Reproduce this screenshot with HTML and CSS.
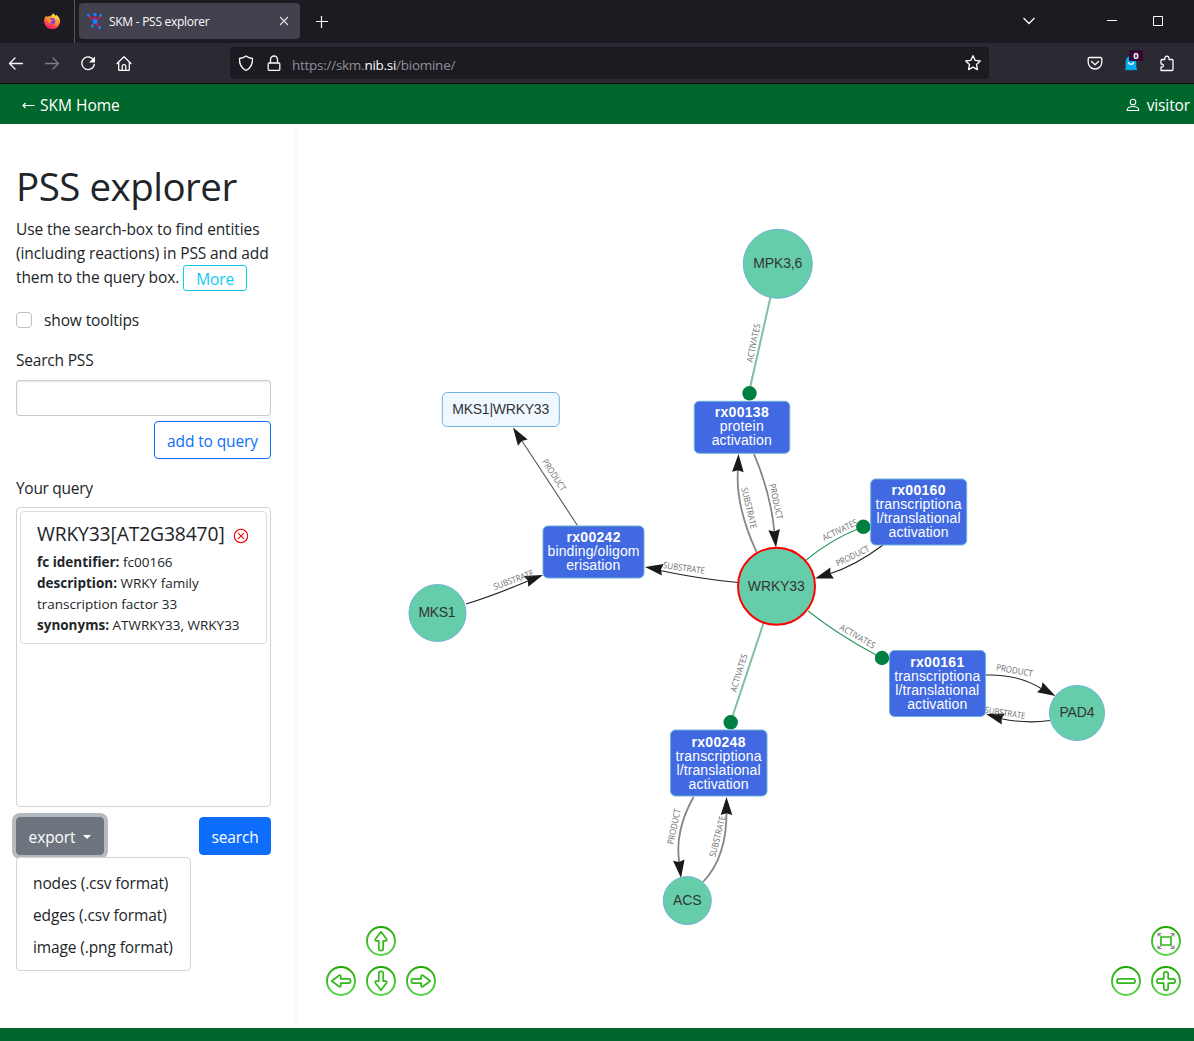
FILE: index.html
```html
<!DOCTYPE html>
<html lang="en">
<head>
<meta charset="utf-8">
<title>SKM - PSS explorer</title>
<link rel="stylesheet" href="styles.css">
</head>
<body>
<div class="tabbar">
  <div class="pinned">
    <svg width="16" height="16" viewBox="0 0 16 16"><defs><linearGradient id="fx" x1=".8" y1="0" x2=".3" y2="1"><stop offset="0" stop-color="#fff44f"/><stop offset=".45" stop-color="#ff9a2b"/><stop offset=".8" stop-color="#ff3750"/><stop offset="1" stop-color="#f5156c"/></linearGradient></defs><path d="M9.400 0c.6 1.500 1.500 2 2.500 2.800l.2-1C14.500 3.200 16 5.500 16 8.300A7.900 7.900 0 0 1 .1 8.300C.1 6 1 4 2.300 2.600L2.800 4l1.500-.8 1.900.3C6.500 2.500 8.300 2 9.400 0z" fill="url(#fx)"/><circle cx="7.900" cy="8.300" r="3.300" fill="#8a3fe0"/><path d="M3 6.500c1.200-1.500 3-.8 4 .2l1.600.2c-.2 1-1.500 1-2 1.800-.2 1 .4 1.800 1.600 1.900-2 .7-4.200-.3-4.200-2.500z" fill="#ff8b2a"/></svg>
  </div>
  <div class="tab">
    <svg width="16" height="16" viewBox="0 0 16 16"><path d="M1.500 2.500 8 8.500 14 2.500M8 8.500v-6M8 8.500l-3 4.500M8 8.500l4.500 6" stroke="#f0105f" stroke-width="1.300" fill="none"/><g fill="#0a84ff"><circle cx="8" cy="8.500" r="2.500"/><path d="M0 1h2.500v2.500H0zM6.500 0h3v3h-3zM12.500 1H15v2.500h-2.500zM4 12h2.500v2.500H4zM11.500 13.300H14V16h-2.500z"/></g></svg>
    <span class="tab-title">SKM - PSS explorer</span>
    <svg class="tab-close" width="10" height="10" viewBox="0 0 10 10"><path d="m1 1 8 8M9 1 1 9" stroke="#e0e0e6" stroke-width="1.100"/></svg>
  </div>
  <svg class="newtab" width="12" height="12" viewBox="0 0 12 12"><path d="M5.500 0v12M0 5.500h12" stroke="#fbfbfe" stroke-width="1.200"/></svg>
  <div class="window-buttons">
    <svg width="14" height="8" viewBox="0 0 14 8"><path d="m1.500 1 5.500 5.500L12.500 1" fill="none" stroke="#fbfbfe" stroke-width="1.300"/></svg>
    <svg width="10" height="10" viewBox="0 0 10 10"><path d="M0 4.500h10" stroke="#fff"/></svg>
    <svg width="10" height="10" viewBox="0 0 10 10"><path d="M.5.500h9v9h-9z" fill="none" stroke="#fff"/></svg>
  </div>
</div>
<div class="toolbar">
  <div class="nav">
    <svg width="16" height="16" viewBox="0 0 16 16"><path d="M14.500 8.500h-13M7 3 1.500 8.500 7 14"/></svg>
    <svg class="dim" width="16" height="16" viewBox="0 0 16 16"><path d="M1.500 8.500h13M9 3l5.500 5.500L9 14"/></svg>
    <svg width="16" height="16" viewBox="0 0 16 16"><path d="M13.500 5A6.300 6.300 0 1 0 14.300 9.500"/><path d="M15 1.500v6H9z" class="solid"/></svg>
    <svg width="16" height="16" viewBox="0 0 16 16"><path d="M1 8.500 8 1.700l7 6.800M2.700 7.500v7c0 .7.300 1 1 1h8.600c.7 0 1-.3 1-1v-7M6.200 15.500v-4c0-1.200.6-1.800 1.800-1.800s1.800.6 1.800 1.800v4"/></svg>
  </div>
  <div class="urlbar">
    <svg width="16" height="17" viewBox="0 0 16 17"><path d="M8 1c2 1.500 4 2.100 6.500 2.500.3 5.500-1.500 9.500-6.500 12-5-2.500-6.800-6.500-6.500-12C4 3.100 6 2.500 8 1z"/></svg>
    <svg width="14" height="17" viewBox="0 0 14 17"><path d="M3.500 8V4.500a3.500 3.500 0 0 1 7 0V8M2.200 8h9.600c.6 0 1 .4 1 1v5.300c0 .6-.4 1-1 1H2.200c-.6 0-1-.4-1-1V9c0-.6.400-1 1-1z"/></svg>
    <span class="url">https://skm.<b>nib.si</b>/biomine/</span>
    <svg class="star" width="18" height="18" viewBox="0 0 18 18"><path d="m9 1.700 2.200 4.700 5.100.6-3.800 3.500 1 5.100L9 13.100l-4.500 2.500 1-5.100L1.700 7l5.100-.6z"/></svg>
  </div>
  <div class="extensions">
    <svg width="16" height="16" viewBox="0 0 16 16"><path d="M2.500 2.500h11c.8 0 1.300.5 1.300 1.300v3.400a6.800 6.800 0 0 1-13.600 0V3.800c0-.8.500-1.300 1.300-1.300zM4.500 6.500 8 9.700l3.500-3.200"/></svg>
    <div class="ghost"><svg width="14" height="16" viewBox="0 0 14 16"><path d="M.8 15.200c1.300-2 .7-5 .9-8C1.900 3 4 1 7 1s5.100 2 5.300 6.200c.1 3-.2 6 1 8l-2-.5-1.500.8-1.300-1L7 15.800l-1.500-1.300-1.300 1-1.400-.8z" style="fill:#00aef0;stroke:none"/><path d="M4.500 7.500C5 10 9 10 9.500 7.500" stroke="#fff"/></svg><span class="count">0</span></div>
    <svg width="16" height="17" viewBox="0 0 16 17"><path d="M2 15.500V12c3 .7 3.500-3.300 0-3V5.500c0-.6.300-1 1-1h2.800c-.5-4.500 4.800-4.500 4.200 0h3c.6 0 1 .4 1 1v9c0 .7-.4 1-1 1z"/></svg>
  </div>
</div>
<header class="site-header">
  <a class="home"><svg width="13" height="10" viewBox="0 0 13 10"><path d="M12.500 5.500H1M3.500 3 1 5.500 3.500 8" fill="none" stroke="#fff" stroke-width="1.200"/></svg>SKM Home</a>
  <a class="visitor"><svg width="14" height="14" viewBox="0 0 14 14"><circle cx="7" cy="4" r="2.800" fill="none" stroke="#fff" stroke-width="1.100"/><path d="M1.200 12.500c0-2.400 2-4 5.800-4s5.800 1.600 5.800 4z" fill="none" stroke="#fff" stroke-width="1.100"/></svg>visitor</a>
</header>
<main class="content">
  <aside class="sidebar">
    <h1>PSS explorer</h1>
    <p class="intro">Use the search-box to find entities<br>(including reactions) in PSS and add<br>them to the query box. <span class="more">More</span></p>
    <label class="check"><span class="box"></span>show tooltips</label>
    <div class="label">Search PSS</div>
    <div class="input"></div>
    <div class="row-end"><button class="btn outline">add to query</button></div>
    <div class="label query-label">Your query</div>
    <div class="query">
      <div class="card">
        <div class="card-title">WRKY33[AT2G38470]<svg width="16" height="16" viewBox="0 0 16 16"><circle cx="8" cy="8" r="6.700" fill="none" stroke="#f00" stroke-width="1.100"/><path d="m5.200 5.200 5.600 5.600M10.800 5.200l-5.600 5.600" stroke="#f00" stroke-width="1.100"/></svg></div>
        <div><b>fc identifier:</b> fc00166</div>
        <div><b>description:</b> WRKY family</div>
        <div>transcription factor 33</div>
        <div><b>synonyms:</b> ATWRKY33, WRKY33</div>
      </div>
    </div>
    <div class="actions">
      <div class="dropdown">
        <button class="btn export">export<i class="caret"></i></button>
        <div class="menu"><a>nodes (.csv format)</a><a>edges (.csv format)</a><a>image (.png format)</a></div>
      </div>
      <button class="btn primary">search</button>
    </div>
  </aside>
  <svg class="network" width="897" height="904" viewBox="297 124 897 904">
    <defs>
      <path id="arrow" d="M0 0-18 5.800-16.200 0-18-5.800z" fill="#1a1a1a"/>
      <linearGradient id="ctl" x1="0" y1="0" x2="0" y2="1"><stop offset="0" stop-color="#1fa800"/><stop offset="1" stop-color="#57d34a"/></linearGradient>
      <path id="navArrow" d="M-9.300 0-2-5.500c1.200-.7 1.800-.2 1.800.7v2.600h8c1.300 0 1.800.6 1.800 2.200s-.5 2.200-1.800 2.200h-8v2.600c0 .9-.6 1.400-1.800.7z"/>
    </defs>
    <g class="edges">
      <path class="act" d="M770.500 297 750 388"/>
      <path class="act" d="M763.500 623 732 718"/>
      <path class="act thin" d="M806 560Q832 539 859 528.500"/>
      <path class="act thin" d="M808 611Q840 636 878 656"/>
      <path class="thin" d="M577.500 525.500 522 441"/>
      <path class="thin dark" d="M466 604Q492 596 528 581"/>
      <path class="thin dark" d="M738 582.500Q700 579 660 570.500"/>
      <path d="M756.500 552Q735 505 738 469"/>
      <path d="M754 454Q771 494 774.500 533"/>
      <path class="thin dark" d="M883 545Q855 566 829 574"/>
      <path class="thin dark" d="M986 675Q1018 674 1042 689"/>
      <path class="thin dark" d="M1050 720.500Q1026 724 1000 718.500"/>
      <path d="M693.500 797Q674 832 679.500 864"/>
      <path d="M703 882Q727 857 726.500 811"/>
    </g>
    <g>
      <use href="#arrow" transform="translate(513 427.500) rotate(-123)"/>
      <use href="#arrow" transform="translate(543 575) rotate(-21)"/>
      <use href="#arrow" transform="translate(645 567) rotate(-171)"/>
      <use href="#arrow" transform="translate(738.500 454) rotate(-88)"/>
      <use href="#arrow" transform="translate(776 547.500) rotate(84)"/>
      <use href="#arrow" transform="translate(815 578.500) rotate(162)"/>
      <use href="#arrow" transform="translate(1055.500 696) rotate(29)"/>
      <use href="#arrow" transform="translate(986 714) rotate(-164)"/>
      <use href="#arrow" transform="translate(681 878) rotate(83)"/>
      <use href="#arrow" transform="translate(726.500 797) rotate(-90)"/>
    </g>
    <g fill="#008040"><circle cx="749.500" cy="393.300" r="7.200"/><circle cx="863.300" cy="526.800" r="7.200"/><circle cx="882" cy="658" r="7.200"/><circle cx="730.700" cy="722.300" r="7.200"/></g>
    <g class="edge-labels">
      <text textLength="39" lengthAdjust="spacingAndGlyphs" transform="translate(753.500 343) rotate(-78)" y="3">ACTIVATES</text>
      <text textLength="36" lengthAdjust="spacingAndGlyphs" transform="translate(554 475) rotate(57)" y="3">PRODUCT</text>
      <text textLength="42" lengthAdjust="spacingAndGlyphs" transform="translate(513.500 580) rotate(-20)" y="3">SUBSTRATE</text>
      <text textLength="42" lengthAdjust="spacingAndGlyphs" transform="translate(684 568) rotate(8)" y="3">SUBSTRATE</text>
      <text textLength="42" lengthAdjust="spacingAndGlyphs" transform="translate(749 508) rotate(77)" y="3">SUBSTRATE</text>
      <text textLength="36" lengthAdjust="spacingAndGlyphs" transform="translate(776 501.500) rotate(78)" y="3">PRODUCT</text>
      <text textLength="38" lengthAdjust="spacingAndGlyphs" transform="translate(840 530) rotate(-26)" y="3">ACTIVATES</text>
      <text textLength="36" lengthAdjust="spacingAndGlyphs" transform="translate(852.500 556) rotate(-26)" y="3">PRODUCT</text>
      <text textLength="39" lengthAdjust="spacingAndGlyphs" transform="translate(857.500 636.500) rotate(30)" y="3">ACTIVATES</text>
      <text textLength="39" lengthAdjust="spacingAndGlyphs" transform="translate(739 673) rotate(-73)" y="3">ACTIVATES</text>
      <text textLength="37" lengthAdjust="spacingAndGlyphs" transform="translate(1014.500 670.500) rotate(10)" y="3">PRODUCT</text>
      <text textLength="41" lengthAdjust="spacingAndGlyphs" transform="translate(1005 713) rotate(9)" y="3">SUBSTRATE</text>
      <text textLength="36" lengthAdjust="spacingAndGlyphs" transform="translate(674 826.500) rotate(-78)" y="3">PRODUCT</text>
      <text textLength="42" lengthAdjust="spacingAndGlyphs" transform="translate(717.500 836.500) rotate(-76)" y="3">SUBSTRATE</text>
    </g>
    <g class="entities">
      <circle cx="777.800" cy="263.800" r="34.500"/><circle cx="437.500" cy="613" r="28.500"/><circle cx="1077" cy="713" r="27.500"/><circle cx="687.300" cy="900.600" r="24"/>
      <circle class="selected" cx="776.500" cy="586.300" r="38.500"/>
    </g>
    <rect class="complex" x="442.300" y="392.500" width="117" height="34" rx="5"/>
    <g class="reactions">
      <rect x="694.300" y="401.300" width="95.500" height="52" rx="5"/>
      <rect x="543" y="526" width="101" height="52" rx="5"/>
      <rect x="870.700" y="479" width="96" height="66" rx="5"/>
      <rect x="889.500" y="650.500" width="96" height="66" rx="5"/>
      <rect x="670.500" y="730" width="96.500" height="66" rx="5"/>
    </g>
    <g class="names">
      <text x="777.800" y="268" textLength="49">MPK3,6</text><text x="437" y="617" textLength="37">MKS1</text><text x="776.300" y="591" textLength="57">WRKY33</text><text x="1077" y="717" textLength="35">PAD4</text><text x="687.300" y="905">ACS</text><text x="500.700" y="414" textLength="97">MKS1|WRKY33</text>
    </g>
    <g class="names light">
      <text x="741.700" y="417" class="bold" textLength="54">rx00138</text><text x="741.700" y="431" textLength="44">protein</text><text x="741.700" y="445" textLength="60">activation</text>
      <text x="593.500" y="542" class="bold" textLength="54">rx00242</text><text x="593.500" y="556" textLength="92">binding/oligom</text><text x="593.200" y="570" textLength="54">erisation</text>
      <text x="918.500" y="495" class="bold" textLength="54">rx00160</text><text x="918.500" y="509" textLength="86">transcriptiona</text><text x="918.500" y="523" textLength="84">l/translational</text><text x="918.500" y="537" textLength="60">activation</text>
      <text x="937.200" y="667" class="bold" textLength="54">rx00161</text><text x="937.200" y="681" textLength="86">transcriptiona</text><text x="937.200" y="695" textLength="84">l/translational</text><text x="937.200" y="709" textLength="60">activation</text>
      <text x="718.500" y="747" class="bold" textLength="54">rx00248</text><text x="718.500" y="761" textLength="86">transcriptiona</text><text x="718.500" y="775" textLength="84">l/translational</text><text x="718.500" y="789" textLength="60">activation</text>
    </g>
    <g class="rings">
      <circle cx="381" cy="941" r="14"/><circle cx="341" cy="981" r="14"/><circle cx="381" cy="981" r="14"/><circle cx="421" cy="981" r="14"/>
      <circle cx="1166" cy="941" r="14"/><circle cx="1126" cy="981" r="14"/><circle cx="1166" cy="981" r="14"/>
    </g>
    <g class="glyphs">
      <use href="#navArrow" transform="translate(341 981)"/>
      <use href="#navArrow" transform="translate(381 941) rotate(90)"/>
      <use href="#navArrow" transform="translate(381 981) rotate(-90)"/>
      <use href="#navArrow" transform="translate(421 981) rotate(180)"/>
      <rect x="-9" y="-2.200" width="18" height="4.400" rx="1.800" transform="translate(1126 981)"/>
      <path transform="translate(1166 981)" d="M-2.200-7.500c0-2.200 4.400-2.200 4.400 0v5.300h5.300c2.200 0 2.200 4.400 0 4.400H2.200v5.300c0 2.200-4.400 2.200-4.400 0V2.200h-5.300c-2.200 0-2.200-4.400 0-4.400h5.300z"/>
      <rect x="-5" y="-4" width="10" height="8" rx=".5" transform="translate(1166 941)"/>
      <path class="corners" transform="translate(1166 941)" d="M-8-4.500V-7.500h3.500M-8-7.500l3 3M8-4.500V-7.500H4.500M8-7.500l-3 3M-8 4.500V7.500h3.500M-8 7.500l3-3M8 4.500V7.500H4.500M8 7.500l-3-3"/>
    </g>
  </svg>
</main>
<footer class="site-footer"></footer>
</body>
</html>
```
FILE: styles.css
```css
* { box-sizing: border-box; }
body { margin: 0; height: 1041px; display: flex; flex-direction: column; overflow: hidden; background: #fff; color: #212529; font: 15.5px/24px "Open Sans", "Noto Sans", sans-serif; letter-spacing: -0.12px; }
svg { flex: none; display: block; }
.tabbar { height: 43px; background: #1c1b22; display: flex; flex: none; }
.pinned { width: 75px; border-right: 1px solid #56555c; padding: 13px 0 0 44px; }
.tab { margin: 3px 0 0 4px; width: 221px; height: 36px; border-radius: 4px; background: #42414d; display: flex; align-items: center; padding: 0 11px 0 8px; }
.tab-title { font-size: 12px; color: #fbfbfe; margin: 2px 0 0 6px; letter-spacing: -0.28px; }
.tab-close { margin-left: auto; }
.newtab { margin: 16px 0 0 16px; }
.window-buttons { margin-left: auto; display: flex; align-items: center; padding-right: 31px; height: 41px; }
.window-buttons svg:nth-child(2) { margin-left: 71px; }
.window-buttons svg:nth-child(3) { margin-left: 36px; }
.toolbar { height: 41px; background: #2b2a33; border-bottom: 1px solid #0c0c0d; display: flex; align-items: center; flex: none; }
.toolbar svg { fill: none; stroke: #fbfbfe; stroke-width: 1.3; stroke-linejoin: round; stroke-linecap: round; }
.toolbar .solid { fill: #fbfbfe; stroke: none; }
.toolbar .dim { opacity: .4; }
.nav { display: flex; gap: 20px; padding-left: 8px; width: 230px; }
.urlbar { width: 759px; height: 32px; border-radius: 4px; background: #1c1b22; display: flex; align-items: center; padding: 0 7px 0 8px; }
.urlbar svg:nth-child(2) { margin-left: 13px; }
.url { font-size: 13.5px; margin: 3px 0 0 11px; color: #8f8f96; letter-spacing: -0.27px; }
.url b { color: #fbfbfe; font-weight: 400; }
.star { margin-left: auto; }
.extensions { display: flex; gap: 20px; margin-left: auto; padding-right: 19px; align-items: center; }
.ghost { position: relative; margin: 0 1px; }
.count { position: absolute; left: 5px; top: -5px; width: 14px; height: 11px; background: #350535; color: #fff; font: bold 9.5px/11px "Open Sans", sans-serif; text-align: center; border-radius: 1px; }
.site-header { height: 40px; flex: none; background: #00672c; color: #fff; display: flex; justify-content: space-between; align-items: center; padding: 2px 4px 0 22px; }
.home, .visitor { display: flex; align-items: center; gap: 5px; }
.home { letter-spacing: 0; }
.visitor { gap: 7px; }
.content { height: 904px; flex: none; display: flex; }
.sidebar { width: 297px; flex: none; border-right: 2px solid #f8f9fa; padding: 37px 24px 0 16px; }
h1 { margin: 0 0 8px; font-size: 38.5px; line-height: 50px; height: 48px; font-weight: 400; letter-spacing: -0.5px; white-space: nowrap; }
.intro { margin: 0 0 18px; height: 72px; white-space: nowrap; letter-spacing: -0.11px; }
.more { display: inline-block; border: 1px solid #0dcaf0; border-radius: 3px; color: #0dcaf0; height: 26px; width: 64px; line-height: 26px; text-align: center; vertical-align: top; margin: 0; }
.check { display: flex; align-items: center; height: 26px; }
.box { width: 16px; height: 16px; border: 1px solid #bfbfbf; border-radius: 4px; margin-right: 12px; }
.label { height: 24px; margin-top: 15px; letter-spacing: -0.2px; }
.input { height: 36px; margin-top: 8px; border: 1px solid #ccc; border-radius: 3px; box-shadow: inset 0 1px 2px rgba(0,0,0,.1); }
.row-end { display: flex; justify-content: flex-end; margin-top: 5px; }
.btn { font: inherit; letter-spacing: inherit; height: 38px; padding: 1px 0 0; border: 1px solid; border-radius: 4px; }
.outline { width: 117px; color: #0d6efd; background: #fff; }
.query-label { margin-top: 17px; letter-spacing: -0.3px; }
.query { height: 300px; margin-top: 7px; border: 1px solid #ced4da; border-radius: 4px; padding: 3px; }
.card { border: 1px solid #dcdcdc; border-radius: 4px; height: 133px; padding: 9px 0 0 16px; font-size: 13.5px; line-height: 21px; white-space: nowrap; letter-spacing: 0; }
.card-title { font-size: 19.3px; line-height: 26px; height: 31px; display: flex; align-items: flex-start; gap: 8px; letter-spacing: -0.14px; }
.card-title svg { margin-top: 7px; }
.actions { display: flex; justify-content: space-between; margin-top: 10px; }
.dropdown { position: relative; }
.export { width: 88px; background: #6c757d; border-color: #6c757d; color: #fff; box-shadow: 0 0 0 4px #b5babe; }
.caret { display: inline-block; border: 4.500px solid transparent; border-top-color: #fff; border-bottom: 0; margin-left: 8px; vertical-align: 4px; }
.menu { position: absolute; left: 0; top: 40px; width: 175px; height: 114px; background: #fff; border: 1px solid #d5d5d5; border-radius: 4px; padding: 9px 0 0 16px; white-space: nowrap; }
.menu a { display: block; line-height: 32px; }
.primary { width: 72px; background: #0d6efd; border-color: #0d6efd; color: #fff; }
.site-footer { height: 13px; background: #00672c; flex: none; }
.network { letter-spacing: 0; }
.edges path { fill: none; stroke: #858585; stroke-width: 1.8; }
.edges .act { stroke: #80c09f; stroke-width: 2; }
.edges .thin { stroke: #555; stroke-width: 1.1; }
.edges .dark { stroke: #222; }
.edges .act.thin { stroke: #2d9660; stroke-width: 1.1; }
.edge-labels text { font: 8.8px "Open Sans", sans-serif; fill: #6c6c6c; text-anchor: middle; }
.entities circle { fill: #66cdaa; stroke: #6fb1d6; }
.entities .selected { stroke: #f00; stroke-width: 2; }
.complex { fill: #f0f8ff; stroke: #6fb1d6; }
.reactions rect { fill: #4169e1; stroke: #6fb1d6; }
.names text { font: 14px "Liberation Sans", sans-serif; fill: #343434; text-anchor: middle; }
.names.light text { fill: #fff; }
.names text.bold { font-weight: bold; }
.rings circle { fill: none; stroke: url(#ctl); stroke-width: 1.9; }
.glyphs { fill: none; stroke: #32b81a; stroke-width: 1.7; stroke-linejoin: round; }
.corners { stroke: #888; stroke-width: 1.1; }
```
